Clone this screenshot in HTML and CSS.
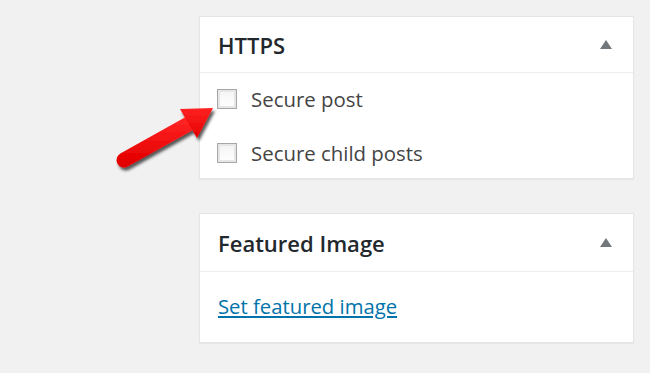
FILE: index.html
```html
<!DOCTYPE html>
<html lang="en">
<head>
  <meta charset="UTF-8" />
  <title>Post sidebar</title>
  <link rel="stylesheet" href="styles.css">
</head>
<body>
  <div class="sidebar">
    <div class="postbox">
      <div class="postbox-head">
        <h2>HTTPS</h2>
        <span class="toggle"></span>
      </div>
      <div class="postbox-body">
        <label class="row"><input type="checkbox" class="check"> Secure post</label>
        <label class="row"><input type="checkbox" class="check"> Secure child posts</label>
      </div>
    </div>
    <div class="postbox">
      <div class="postbox-head tall">
        <h2>Featured Image</h2>
        <span class="toggle"></span>
      </div>
      <div class="postbox-body link-body">
        <a href="#" class="link">Set featured image</a>
      </div>
    </div>
  </div>
  <!-- annotation arrow -->
  <svg class="arrow" width="110" height="80" viewBox="0 0 110 80">
    <defs>
      <filter id="shade" x="-20%" y="-20%" width="150%" height="150%">
        <feDropShadow dx="2" dy="3" stdDeviation="1.6" flood-color="#000" flood-opacity="0.65"/>
      </filter>
      <linearGradient id="red" x1="0" y1="0" x2="0" y2="1">
        <stop offset="0" stop-color="#ff2222"/>
        <stop offset="1" stop-color="#e40000"/>
      </linearGradient>
    </defs>
    <g filter="url(#shade)" fill="url(#red)">
      <path d="M14 65 L82 27" stroke="url(#red)" stroke-width="15" stroke-linecap="round"/>
      <polygon points="70,14 103,13 87,43"/>
    </g>
  </svg>
</body>
</html>
```

FILE: styles.css
```css
body {
  margin: 0;
  padding: 16px 16px 0 199px;
  background: #f1f1f1;
  font-family: 'Open Sans', sans-serif;
  color: #32373c;
  position: relative;
}
.sidebar {
  width: 435px;
}
.postbox {
  background: #fff;
  border: 1px solid #e5e5e5;
  box-shadow: 0 1px 1px rgba(0, 0, 0, 0.04);
  margin-bottom: 34px;
}
.postbox-head {
  height: 55px;
  display: flex;
  align-items: center;
  justify-content: space-between;
  padding: 0 21px 0 18px;
  border-bottom: 1px solid #eee;
}
.postbox-head.tall {
  height: 57px;
}
.postbox-head h2 {
  margin: 0;
  font-size: 22px;
  font-weight: 600;
  color: #23282d;
}
.toggle {
  width: 0;
  height: 0;
  border-left: 6.5px solid transparent;
  border-right: 6.5px solid transparent;
  border-bottom: 9px solid #72777c;
  margin-top: -1px;
}
.postbox-body {
  padding: 16px 17px 15px;
  display: flex;
  flex-direction: column;
  gap: 34px;
}
.row {
  display: flex;
  align-items: center;
  gap: 14px;
  font-size: 20.4px;
  height: 20px;
  color: #444;
}
.check {
  appearance: none;
  margin: 0;
  width: 20px;
  height: 20px;
  border: 1px solid #a7a7a7;
  background: linear-gradient(#f4f4f4, #fff);
  box-shadow: inset 0 0 0 2px #e6e6e6;
}
.link-body {
  padding: 20px 18px 22px;
}
.link {
  font-size: 20.3px;
  line-height: 28px;
  color: #0073aa;
  text-decoration: underline;
}
.arrow {
  position: absolute;
  left: 110px;
  top: 95px;
}
```
